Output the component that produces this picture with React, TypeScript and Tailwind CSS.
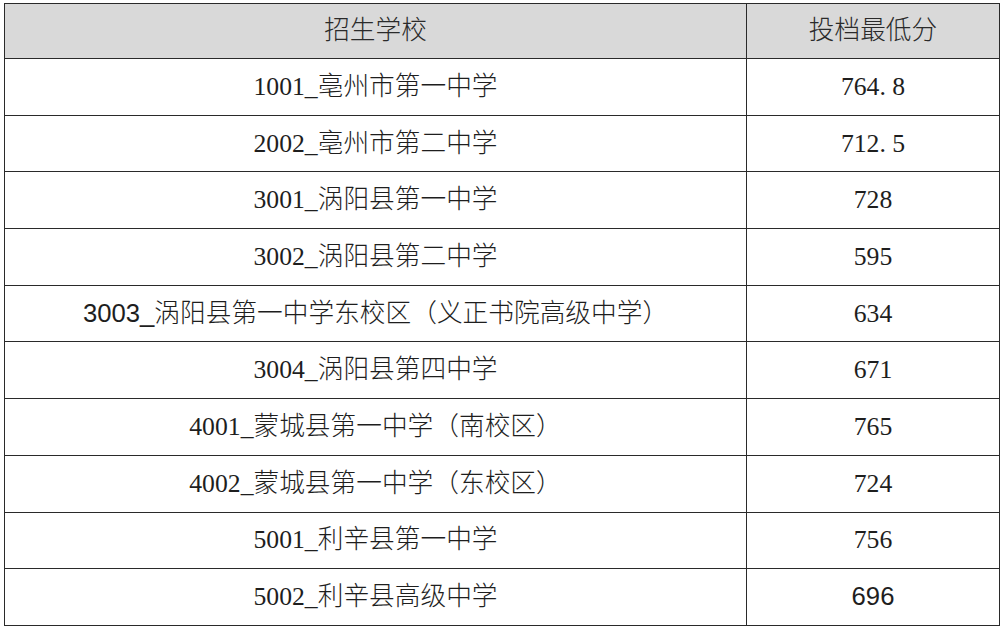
const serif = "font-['Liberation_Serif','Noto_Sans_CJK_SC',serif]";
const sans = "font-['Liberation_Sans','Noto_Sans_CJK_SC',sans-serif]";

const rows: { school: string; score: string; sansSchool?: boolean; sansScore?: boolean }[] = [
  { school: '1001_亳州市第一中学', score: '764.8' },
  { school: '2002_亳州市第二中学', score: '712.5' },
  { school: '3001_涡阳县第一中学', score: '728' },
  { school: '3002_涡阳县第二中学', score: '595' },
  { school: '3003_涡阳县第一中学东校区（义正书院高级中学）', score: '634', sansSchool: true },
  { school: '3004_涡阳县第四中学', score: '671' },
  { school: '4001_蒙城县第一中学（南校区）', score: '765' },
  { school: '4002_蒙城县第一中学（东校区）', score: '724' },
  { school: '5001_利辛县第一中学', score: '756' },
  { school: '5002_利辛县高级中学', score: '696', sansScore: true },
];

// SimSun-style half-width period: give the dot a wider box
function Score({ value }: { value: string }) {
  const [a, b] = value.split('.');
  if (b === undefined) return <>{value}</>;
  return (
    <>
      {a}
      <span className="inline-block w-[0.5em] text-left">.</span>
      {b}
    </>
  );
}

export default function App() {
  return (
    <div className="min-h-screen bg-white pt-[3px] pl-[4px]">
      <table className="w-[995px] table-fixed border-collapse text-[25.7px] font-light leading-none text-[#1e1e1e]">
        <colgroup>
          <col className="w-[742px]" />
          <col className="w-[253px]" />
        </colgroup>
        <thead>
          <tr className="h-[55px] bg-[#d9d9d9]">
            <th className={`border-[1.5px] border-[#2a2a2a] text-center font-light text-[#2a2a2a] ${serif}`}>招生学校</th>
            <th className={`border-[1.5px] border-[#2a2a2a] text-center font-light text-[#2a2a2a] ${serif}`}>投档最低分</th>
          </tr>
        </thead>
        <tbody>
          {rows.map((r) => (
            <tr key={r.school} className="h-[56.7px]">
              <td className={`border-[1.5px] border-[#2a2a2a] text-center ${r.sansSchool ? sans : serif}`}>{r.school}</td>
              <td className={`border-[1.5px] border-[#2a2a2a] text-center ${r.sansScore ? sans : serif}`}>
                <Score value={r.score} />
              </td>
            </tr>
          ))}
        </tbody>
      </table>
    </div>
  );
}
